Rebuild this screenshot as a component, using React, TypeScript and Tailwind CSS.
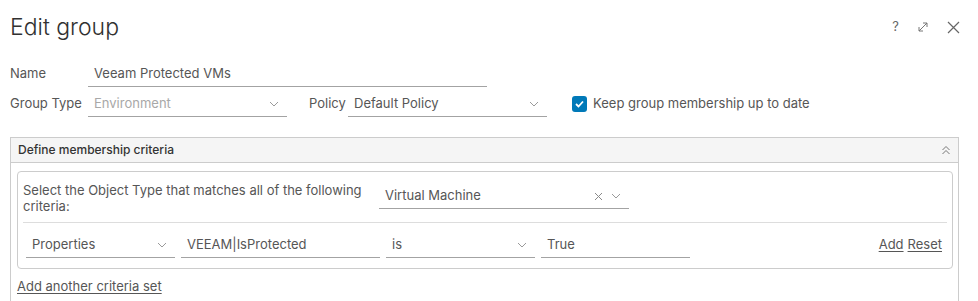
import React from "react";

const font = { fontFamily: "Inter, 'Open Sans', 'Liberation Sans', sans-serif" };

function Chevron({ className = "" }: { className?: string }) {
  return (
    <svg width="10" height="6" viewBox="0 0 10 6" className={className}>
      <path d="M1 1 L5 5 L9 1" fill="none" stroke="#9a9a9a" strokeWidth="1" />
    </svg>
  );
}

function Select({ value, w, disabled = false, clear = false }: { value: string; w: string; disabled?: boolean; clear?: boolean }) {
  return (
    <div className={`${w} h-[25px] border-b border-[#a3a3a3] flex items-center pl-[6px] pr-[8px]`}>
      <span className={`flex-1 text-[13px] ${disabled ? "text-[#a8a8a8]" : "text-[#565656]"}`}>{value}</span>
      {clear && (
        <svg width="9" height="9" viewBox="0 0 9 9" className="mr-[8px]">
          <path d="M1 1 L8 8 M8 1 L1 8" stroke="#8a8a8a" strokeWidth="1" />
        </svg>
      )}
      <Chevron />
    </div>
  );
}

function Input({ value, w }: { value: string; w: string }) {
  return (
    <div className={`${w} h-[25px] border-b border-[#a3a3a3] flex items-center pl-[6px]`}>
      <span className="text-[13px] text-[#565656]">{value}</span>
    </div>
  );
}

export default function App() {
  return (
    <div className="w-[978px] h-[301px] overflow-hidden bg-white pl-[10px] relative" style={font}>
      <div className="h-[54px] flex items-center justify-between pr-[18px]">
        <span className="text-[23px] font-light text-[#313131]">Edit group</span>
        <div className="flex items-center gap-[18px]">
          <span className="text-[13px] text-[#666]">?</span>
          <svg width="12" height="12" viewBox="0 0 12 12">
            <path d="M2 10 L10 2 M6 2 H10 V6 M2 6 V10 H6" fill="none" stroke="#777" strokeWidth="1" />
          </svg>
          <svg width="13" height="13" viewBox="0 0 13 13">
            <path d="M1 1 L12 12 M12 1 L1 12" stroke="#666" strokeWidth="1.2" />
          </svg>
        </div>
      </div>

      <div className="flex items-center h-[24px] mt-[8px]">
        <span className="w-[78px] text-[13px] text-[#565656]">Name</span>
        <Input value="Veeam Protected VMs" w="w-[399px]" />
      </div>

      <div className="flex items-center h-[26px] mt-[5px]">
        <span className="w-[78px] text-[13px] text-[#565656]">Group Type</span>
        <Select value="Environment" w="w-[199px]" disabled />
        <span className="ml-[22px] w-[39px] text-[13px] text-[#565656]">Policy</span>
        <Select value="Default Policy" w="w-[199px]" />
        <div className="ml-[25px] w-[15px] h-[16px] rounded-[3px] bg-[#0079b8] flex items-center justify-center">
          <svg width="9" height="8" viewBox="0 0 9 8">
            <path d="M1 4 L3.5 6.5 L8 1.5" fill="none" stroke="white" strokeWidth="1.8" />
          </svg>
        </div>
        <span className="ml-[6px] text-[13px] text-[#565656]">Keep group membership up to date</span>
      </div>

      <div className="mt-[20px] w-[949px] h-[200px] border border-[#cccccc]">
        <div className="h-[25px] bg-[#f5f5f5] border-b border-[#cccccc] flex items-center justify-between pl-[7px] pr-[7px]">
          <span className="text-[12px] font-medium text-[#333]">Define membership criteria</span>
          <svg width="10" height="10" viewBox="0 0 10 10">
            <path d="M1.5 5 L5 1.5 L8.5 5 M1.5 9 L5 5.5 L8.5 9" fill="none" stroke="#777" strokeWidth="1" />
          </svg>
        </div>
        <div className="mt-[8px] ml-[6px] w-[936px] h-[98px] border border-[#cccccc] rounded-[4px] px-[5px]">
          <div className="h-[51px] border-b border-[#dddddd] flex items-start">
            <div className="w-[356px] pt-[10px] text-[13px] leading-[16px] text-[#565656]">
              Select the Object Type that matches all of the following criteria:
            </div>
            <div className="mt-[12px]">
              <Select value="Virtual Machine" w="w-[250px]" clear />
            </div>
          </div>
          <div className="flex items-center pl-[3px] pr-[5px] h-[46px]">
            <div className="flex items-center gap-[6px] -mt-[1px]">
              <Select value="Properties" w="w-[149px]" />
              <Input value="VEEAM|IsProtected" w="w-[199px]" />
              <Select value="is" w="w-[149px]" />
              <Input value="True" w="w-[149px]" />
            </div>
            <div className="ml-auto flex items-center gap-[4px] text-[13px] text-[#565656] -mt-[3px]">
              <span className="underline underline-offset-2">Add</span>
              <span className="underline underline-offset-2">Reset</span>
            </div>
          </div>
        </div>
        <div className="ml-[6px] mt-[8px] text-[13px] text-[#565656] underline underline-offset-2">Add another criteria set</div>
      </div>
    </div>
  );
}
